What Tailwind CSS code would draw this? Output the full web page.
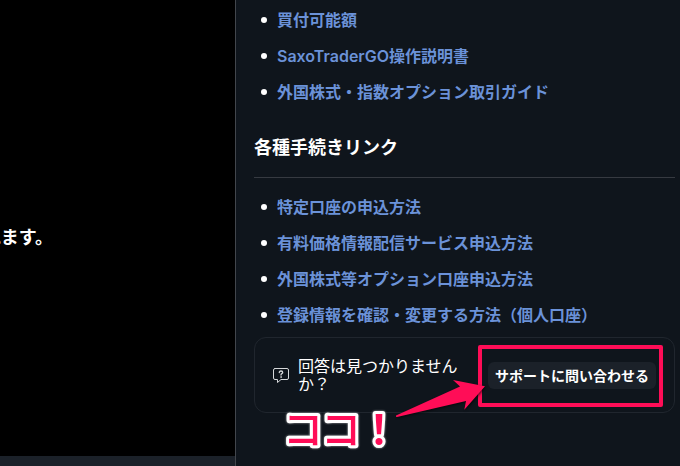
<!DOCTYPE html>
<html lang="ja">
<head>
  <meta charset="UTF-8">
  <meta name="viewport" content="width=device-width, initial-scale=1.0">
  <title>サポート</title>
  <script src="https://cdn.jsdelivr.net/npm/@tailwindcss/browser@4"></script>
</head>
<body class="flex min-h-screen overflow-hidden bg-[#0f151c] font-['Inter','Noto_Sans_CJK_JP',sans-serif] text-white">
  <main class="flex w-[235px] shrink-0 flex-col bg-black">
    <div class="flex flex-1 items-center justify-end overflow-hidden pt-5 pr-[182px]">
      <p class="text-lg font-bold whitespace-nowrap">れます。</p>
    </div>
    <div class="h-[10px] bg-[#1b2129]"></div>
  </main>

  <aside class="min-w-0 flex-1 border-l border-[#42464c] pt-2 pr-[5px] pl-[18px]">
    <ul class="flex flex-col gap-3 pl-[7px] leading-6 font-semibold *:flex *:items-center *:gap-[10px] *:before:size-[6px] *:before:shrink-0 *:before:rounded-full *:before:bg-white">
      <li><a href="#" class="text-[#6b92d8]">買付可能額</a></li>
      <li><a href="#" class="text-[#6b92d8]">SaxoTraderGO操作説明書</a></li>
      <li><a href="#" class="text-[#6b92d8]">外国株式・指数オプション取引ガイド</a></li>
    </ul>

    <h2 class="mt-[30px] border-b border-[#363a41] pb-[15px] text-lg font-bold">各種手続きリンク</h2>

    <ul class="mt-[17px] flex flex-col gap-3 pl-[7px] leading-6 font-semibold *:flex *:items-center *:gap-[10px] *:before:size-[6px] *:before:shrink-0 *:before:rounded-full *:before:bg-white">
      <li><a href="#" class="text-[#6b92d8]">特定口座の申込方法</a></li>
      <li><a href="#" class="text-[#6b92d8]">有料価格情報配信サービス申込方法</a></li>
      <li><a href="#" class="text-[#6b92d8]">外国株式等オプション口座申込方法</a></li>
      <li><a href="#" class="text-[#6b92d8]">登録情報を確認・変更する方法（個人口座）</a></li>
    </ul>

    <div class="relative mt-[10px] flex items-center rounded-xl border border-[#20262e] px-[18px] py-[19px]">
      <svg class="h-4 w-4 shrink-0" viewBox="0 0 16 16" fill="none" stroke="#d6d8da" stroke-linejoin="round" stroke-linecap="round">
        <path d="M2 1.500h12q1.500 0 1.500 1.500v8q0 1.500-1.500 1.500H8L4.500 15.500v-3H2Q.5 12.500.5 11V3Q.5 1.500 2 1.500z"/>
        <path d="M6.300 5.500q0-1.500 1.700-1.500t1.700 1.500q0 .8-.9 1.200-.8.4-.8 1.300" stroke-width="1.300"/>
        <circle cx="8" cy="10" r=".5" fill="#d6d8da" stroke-width=".6"/>
      </svg>
      <p class="ml-[9px] w-[164px] leading-[18px]">回答は見つかりませんか？</p>
      <button type="button" class="ml-auto rounded-md bg-[#1b2129] px-[7px] py-1 text-sm leading-[19px] font-bold whitespace-nowrap">サポートに問い合わせる</button>

      <!-- callout over the card -->
      <div class="pointer-events-none absolute top-[7px] right-[11px] h-[62px] w-[185px] rounded-xs border-4 border-[#ff0d57]"></div>
      <svg class="pointer-events-none absolute top-10 right-[188px] h-9 w-[92px] overflow-visible drop-shadow-[1px_1px_1px_rgba(0,0,0,0.6)]" viewBox="394 377 92 36">
        <path d="M396 414.500L460 385.500 453 379 485 385.300 464.300 408.700 466 400 397 416Q395.500 416 396 414.500z" fill="#ff0d57"/>
      </svg>
      <svg class="pointer-events-none absolute top-[62px] left-[30px] h-[56px] w-[112px] overflow-visible fill-[#ff0d57] stroke-white stroke-6 font-['Noto_Sans_CJK_JP',sans-serif] text-[40px] drop-shadow-[0_0_1px_rgba(255,255,255,0.6)] [font-feature-settings:'palt'] [paint-order:stroke_fill]" stroke-linejoin="round">
        <text x="0" y="44" class="font-medium">ココ</text>
        <text x="84" y="44" class="font-bold">！</text>
      </svg>
    </div>
  </aside>
</body>
</html>
